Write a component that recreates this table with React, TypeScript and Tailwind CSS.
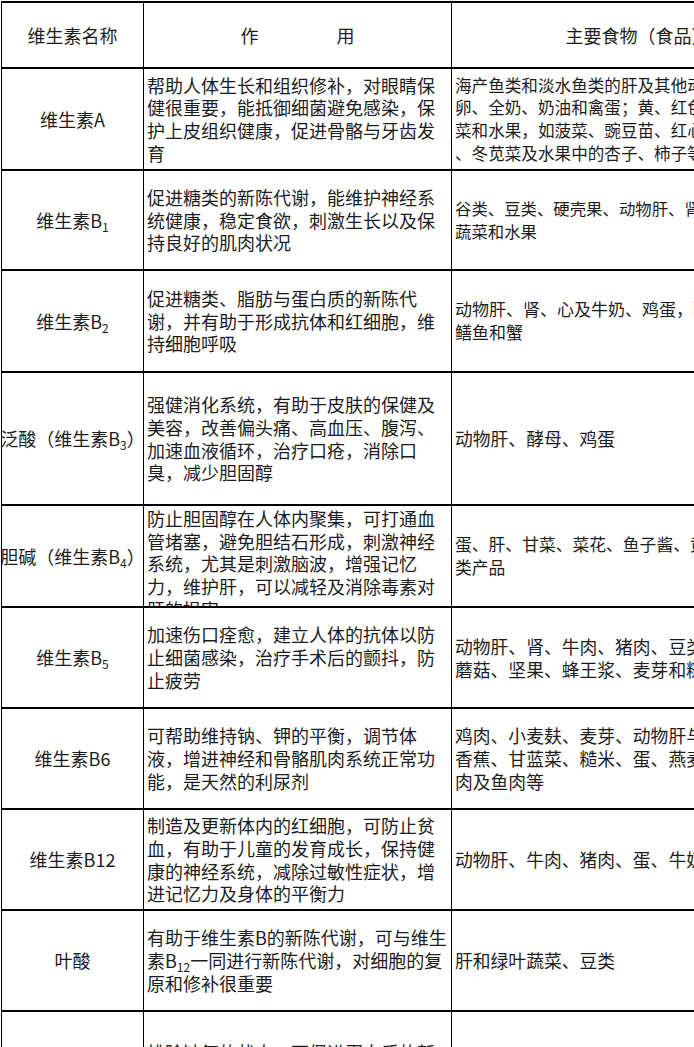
import type { ReactNode } from "react";

type Row = {
  name: ReactNode;
  h: string;
  effect: ReactNode[];
  food: ReactNode[];
  foodSize: string;
  top?: boolean;
};

const Sub = ({ children }: { children: ReactNode }) => (
  <span className="relative top-[4px] text-[12px] leading-none">{children}</span>
);

const rows: Row[] = [
  {
    name: "维生素A",
    h: "h-[102px]",
    effect: [
      "帮助人体生长和组织修补，对眼睛保",
      "健很重要，能抵御细菌避免感染，保",
      "护上皮组织健康，促进骨骼与牙齿发",
      "育",
    ],
    food: [
      "海产鱼类和淡水鱼类的肝及其他动物肝脏、蛋",
      "卵、全奶、奶油和禽蛋；黄、红色的蔬",
      "菜和水果，如菠菜、豌豆苗、红心甜薯",
      "、冬苋菜及水果中的杏子、柿子等",
    ],
    foodSize: "text-[16.6px]",
  },
  {
    name: <>维生素B<Sub>1</Sub></>,
    h: "h-[100px]",
    effect: [
      "促进糖类的新陈代谢，能维护神经系",
      "统健康，稳定食欲，刺激生长以及保",
      "持良好的肌肉状况",
    ],
    food: ["谷类、豆类、硬壳果、动物肝、肾、心、", "蔬菜和水果"],
    foodSize: "text-[16.4px]",
  },
  {
    name: <>维生素B<Sub>2</Sub></>,
    h: "h-[102px]",
    effect: [
      "促进糖类、脂肪与蛋白质的新陈代",
      "谢，并有助于形成抗体和红细胞，维",
      "持细胞呼吸",
    ],
    food: ["动物肝、肾、心及牛奶、鸡蛋，酵母、", "鳝鱼和蟹"],
    foodSize: "text-[17px]",
  },
  {
    name: <>泛酸（维生素B<Sub>3</Sub>）</>,
    h: "h-[133px]",
    effect: [
      "强健消化系统，有助于皮肤的保健及",
      "美容，改善偏头痛、高血压、腹泻、",
      "加速血液循环，治疗口疮，消除口",
      "臭，减少胆固醇",
    ],
    food: ["动物肝、酵母、鸡蛋"],
    foodSize: "text-[17.8px]",
  },
  {
    name: <>胆碱（维生素B<Sub>4</Sub>）</>,
    h: "h-[102px]",
    top: true,
    effect: [
      "防止胆固醇在人体内聚集，可打通血",
      "管堵塞，避免胆结石形成，刺激神经",
      "系统，尤其是刺激脑波，增强记忆",
      "力，维护肝，可以减轻及消除毒素对",
      "肝的损害",
    ],
    food: ["蛋、肝、甘菜、菜花、鱼子酱、黄豆、豆", "类产品"],
    foodSize: "text-[16.8px]",
  },
  {
    name: <>维生素B<Sub>5</Sub></>,
    h: "h-[101px]",
    effect: [
      "加速伤口痊愈，建立人体的抗体以防",
      "止细菌感染，治疗手术后的颤抖，防",
      "止疲劳",
    ],
    food: ["动物肝、肾、牛肉、猪肉、豆类、", "蘑菇、坚果、蜂王浆、麦芽和糙米"],
    foodSize: "text-[17.8px]",
  },
  {
    name: "维生素B6",
    h: "h-[101px]",
    effect: [
      "可帮助维持钠、钾的平衡，调节体",
      "液，增进神经和骨骼肌肉系统正常功",
      "能，是天然的利尿剂",
    ],
    food: ["鸡肉、小麦麸、麦芽、动物肝与肾、", "香蕉、甘蓝菜、糙米、蛋、燕麦、猪", "肉及鱼肉等"],
    foodSize: "text-[17.8px]",
  },
  {
    name: "维生素B12",
    h: "h-[101px]",
    effect: [
      "制造及更新体内的红细胞，可防止贫",
      "血，有助于儿童的发育成长，保持健",
      "康的神经系统，减除过敏性症状，增",
      "进记忆力及身体的平衡力",
    ],
    food: ["动物肝、牛肉、猪肉、蛋、牛奶、奶酪"],
    foodSize: "text-[17.8px]",
  },
  {
    name: "叶酸",
    h: "h-[101px]",
    effect: [
      "有助于维生素B的新陈代谢，可与维生",
      <>素B<Sub>12</Sub>一同进行新陈代谢，对细胞的复</>,
      "原和修补很重要",
    ],
    food: ["肝和绿叶蔬菜、豆类"],
    foodSize: "text-[17.8px]",
  },
  {
    name: <>维生素B<Sub>15</Sub></>,
    h: "h-[150px]",
    effect: [
      "排除缺氧的状态，可促进蛋白质的新",
      "陈代谢，延长细胞寿命，解除酒瘾，",
      "预防疲劳，降低血中胆固醇的含量",
      "",
    ],
    food: ["啤酒酵母、糙米、全麦、南瓜子、芝麻"],
    foodSize: "text-[17.8px]",
  },
];

export default function App() {
  return (
    <div className="h-[1047px] w-[694px] overflow-hidden bg-white text-[#1c1c1c] [font-family:'Noto_Sans_CJK_SC',sans-serif]">
      <div className="ml-px mt-px w-[828px] border-l border-t-2 border-black text-[18px] leading-[22.7px]">
        {/* header */}
        <div className="flex h-[66px] border-b-2 border-black">
          <div className="flex w-[142px] shrink-0 items-center justify-center border-r border-black">
            维生素名称
          </div>
          <div className="flex w-[308px] shrink-0 items-center justify-center gap-[78px] border-r border-black">
            <span>作</span>
            <span>用</span>
          </div>
          <div className="flex w-[376px] shrink-0 items-center justify-center border-r border-black pr-[4px]">
            主要食物（食品）
          </div>
        </div>

        {rows.map((r, i) => (
          <div key={i} className={`flex border-b-2 border-black ${r.h}`}>
            <div className="flex w-[142px] shrink-0 items-center justify-center overflow-hidden whitespace-nowrap border-r border-black">
              <span>{r.name}</span>
            </div>
            <div
              className={`flex w-[308px] shrink-0 flex-col overflow-hidden whitespace-nowrap border-r border-black pl-[3px] ${
                r.top ? "justify-start pt-[1px]" : "justify-center"
              }`}
            >
              {r.effect.map((line, j) => (
                <div key={j} className="h-[22.7px]">
                  {line}
                </div>
              ))}
            </div>
            <div
              className={`flex w-[376px] shrink-0 flex-col justify-center overflow-hidden whitespace-nowrap border-r border-black pl-[3px] ${r.foodSize}`}
            >
              {r.food.map((line, j) => (
                <div key={j} className="h-[22.7px]">
                  {line}
                </div>
              ))}
            </div>
          </div>
        ))}
      </div>
    </div>
  );
}
